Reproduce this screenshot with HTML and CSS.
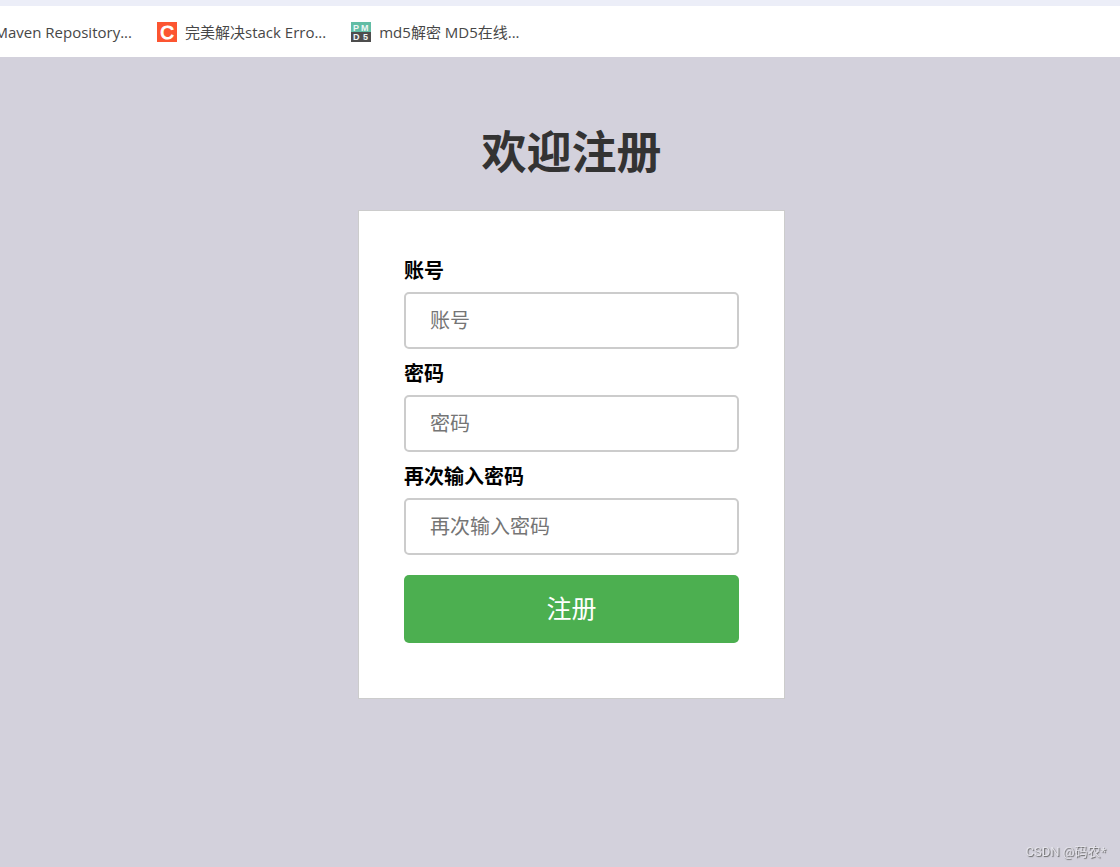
FILE: index.html
```html
<!DOCTYPE html>
<html lang="zh-CN">
<head>
<meta charset="utf-8">
<title>欢迎注册</title>
<link rel="stylesheet" href="styles.css">
</head>
<body>
<nav class="bookmarks">
  <a class="bookmark bookmark-cut" href="#"><span>Maven Repository...</span></a>
  <a class="bookmark" href="#">
    <svg class="favicon" viewBox="0 0 20 20" aria-hidden="true">
      <rect width="20" height="20" fill="#fc5531"/>
      <text class="icon-c" x="10" y="17" text-anchor="middle">C</text>
    </svg>
    <span>完美解决stack Erro...</span>
  </a>
  <a class="bookmark" href="#">
    <svg class="favicon" viewBox="0 0 20 20" aria-hidden="true">
      <rect width="20" height="10" fill="#62bda5"/>
      <rect y="10" width="20" height="10" fill="#4d4d4d"/>
      <text class="icon-md" x="2" y="9">P</text>
      <text class="icon-md" x="10" y="9">M</text>
      <text class="icon-md" x="2" y="18">D</text>
      <text class="icon-md" x="12" y="18">5</text>
    </svg>
    <span>md5解密 MD5在线...</span>
  </a>
</nav>
<main class="page">
  <h1 class="title">欢迎注册</h1>
  <form class="card">
    <label class="label" for="account">账号</label>
    <input class="input" id="account" type="text" placeholder="账号">
    <label class="label" for="password">密码</label>
    <input class="input" id="password" type="password" placeholder="密码">
    <label class="label" for="confirm">再次输入密码</label>
    <input class="input" id="confirm" type="password" placeholder="再次输入密码">
    <button class="submit" type="submit">注册</button>
  </form>
</main>
<div class="watermark">CSDN @码农*</div>
</body>
</html>
```

FILE: styles.css
```css
* {
  box-sizing: border-box;
}

body {
  margin: 0;
  min-height: 100vh;
  background: #d3d1dc;
  font-family: "Open Sans", "Noto Sans CJK SC", sans-serif;
}

.bookmarks {
  display: flex;
  align-items: center;
  gap: 25px;
  height: 57px;
  border-top: 6px solid #eceef8;
  background: #fff;
  overflow: hidden;
}

.bookmark {
  display: flex;
  align-items: center;
  gap: 8px;
  color: #474747;
  font-size: 15px;
  line-height: 20px;
  text-decoration: none;
  white-space: nowrap;
}

.bookmark-cut {
  width: 132px;
  justify-content: flex-end;
}

.favicon {
  width: 20px;
  height: 20px;
  overflow: visible;
}

.icon-c {
  fill: #fff;
  stroke: #fff;
  font: 19px "Liberation Sans", sans-serif;
}

.icon-md {
  fill: #f0f6f5;
  font: bold 9px "Liberation Sans", sans-serif;
}

.page {
  display: flex;
  flex-direction: column;
  align-items: center;
  padding: 65px 0 65px 23px;
}

.title {
  margin: 0 0 28px;
  color: #333;
  font-size: 45px;
  line-height: 60px;
}

.card {
  display: flex;
  flex-direction: column;
  width: 100%;
  max-width: 427px;
  padding: 45px;
  border: 1px solid #ccc;
  background: #fff;
}

.label {
  margin-bottom: 6px;
  color: #000;
  font-size: 20px;
  font-weight: bold;
  line-height: 30px;
}

.input {
  width: 100%;
  height: 57px;
  margin: 0 0 10px;
  padding: 0 24px;
  border: 2px solid #ccc;
  border-radius: 5px;
  background: #fff;
  font-family: inherit;
  font-size: 20px;
}

.input::placeholder {
  color: #757575;
}

.submit {
  height: 68px;
  margin: 10px 0;
  padding: 0 0 4px;
  border: 0;
  border-radius: 5px;
  background: #4caf50;
  color: #fff;
  font-family: inherit;
  font-size: 25px;
}

.watermark {
  position: fixed;
  right: 14px;
  bottom: 6px;
  color: #e4e3ea;
  font-family: Roboto, "Noto Sans CJK SC", sans-serif;
  font-size: 13px;
  line-height: 18px;
  text-shadow: 1px 1px 1px #666;
}
```
